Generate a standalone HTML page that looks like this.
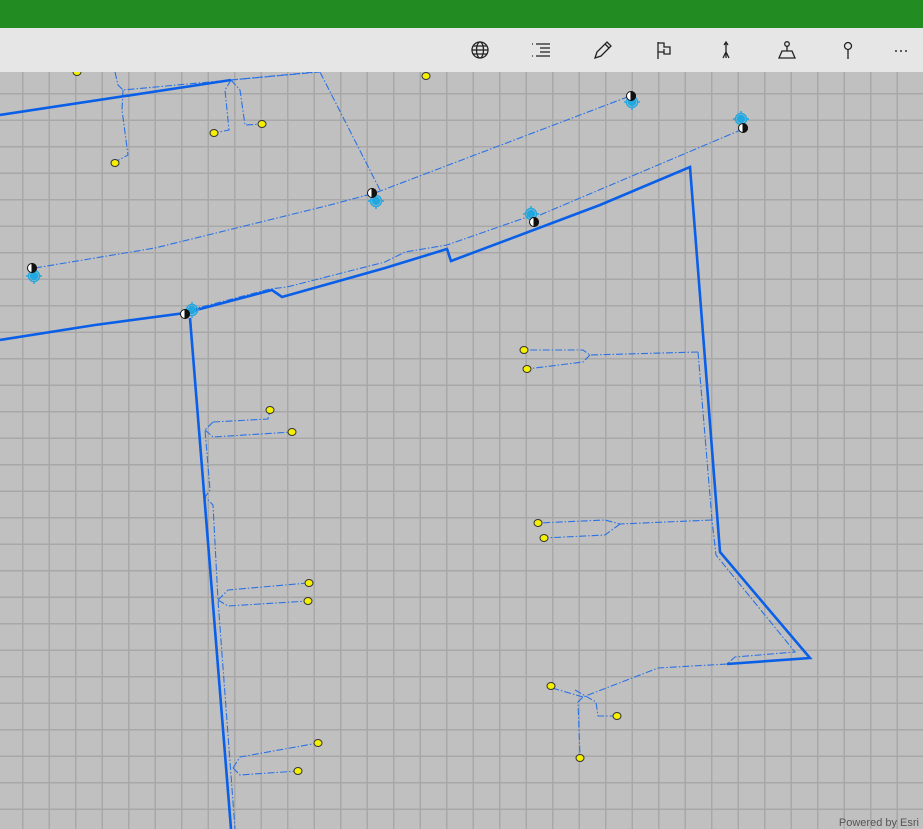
<!DOCTYPE html>
<html><head><meta charset="utf-8"><style>
html,body{margin:0;padding:0;width:923px;height:829px;overflow:hidden;background:#c0c0c0;font-family:"Liberation Sans",sans-serif}
#hdr{position:absolute;left:0;top:0;width:923px;height:28px;background:#228b22}
#tb{position:absolute;left:0;top:28px;width:923px;height:44px;background:#e6e6e6}
#grid{position:absolute;left:0;top:72px;width:923px;height:757px;
background-color:#c0c0c0;
background-image:linear-gradient(to right,#a8a8a8 0,#a8a8a8 1.5px,transparent 1.5px),linear-gradient(to bottom,#a8a8a8 0,#a8a8a8 1.5px,transparent 1.5px);
background-size:26.5px 26.5px;background-position:22px -58.5px}
#map{position:absolute;left:0;top:72px}
#esri{position:absolute;right:4px;bottom:0px;font-size:11px;color:#555}
</style></head><body>
<div id="hdr"></div>
<div id="tb">
<svg width="923" height="44" fill="none" stroke="#222" stroke-width="1.3">
<g transform="translate(480,22)"><circle r="8"/><ellipse rx="3.5" ry="8"/><line x1="-8" y1="0" x2="8" y2="0"/><path d="M-7 -4H7M-7 4H7"/></g>
<g transform="translate(541,22)"><path d="M-5 -6H9M-1 -2H9M-1 2H9M-5 6H9M-9 -6h1M-9 6h1"/></g>
<g transform="translate(603,22)"><path d="M-8 8l2-6 10-10 4 4-10 10z M2 -6l4 4"/></g>
<g transform="translate(664,22)"><path d="M-6 9V-8M-6 -7H0V-3H6V4H0V-1M-6 2H0"/></g>
<g transform="translate(726,22)"><path d="M0 -8V8M-2 -5L0 -8 2 -5M-3 8L0 2 3 8"/></g>
<g transform="translate(787,22)"><circle cx="0" cy="-6" r="2.3"/><path d="M0 -4V1M-5 1H5L8 8H-8Z"/></g>
<g transform="translate(848,22)"><circle cx="0" cy="-4" r="3.5"/><path d="M0 -0.5V9"/></g>
<g fill="#333" stroke="none"><circle cx="896" cy="23" r="1"/><circle cx="901" cy="23" r="1"/><circle cx="906" cy="23" r="1"/></g>
</svg></div>
<div id="grid"></div>
<svg id="map" width="923" height="757" viewBox="0 72 923 757">
<g fill="none" stroke="#2a72e6" stroke-width="1.1" stroke-dasharray="7 2 1.5 2">
<path d="M35 268L155 248 330 205 375 193 630 96"/>
<path d="M380 190L320 72"/>
<path d="M190 310L270 289 287 287 385 262 405 252 447 245 533 215"/>
<path d="M540 215L743 129"/>
<path d="M115 72L118 85 123 90 231 80 320 72"/>
<path d="M123 90L122 110 128 155 115 162"/>
<path d="M231 80L225 90 229 130 214 133"/>
<path d="M231 80L240 90 245 125 262 124"/>
<path d="M231 80L315 72"/>
<path d="M213 422L205 430 210 490 205 497 213 505 218 600 235 829"/>
<path d="M213 422L268 419 270 410M205 430L213 437 292 432"/>
<path d="M218 600L228 590 308 583M218 600L228 606 308 601"/>
<path d="M233 768L240 757 318 743M233 768L240 775 298 771"/>
<path d="M698 352L712 520 716 555 795 652 735 657 727 664 658 668 583 697 578 702 580 757"/>
<path d="M583 697L552 688M575 690L596 702 598 716 617 716"/>
<path d="M698 352L590 355 583 350 525 350M590 355L583 362 527 369"/>
<path d="M712 520L620 524 605 520 538 523M620 524L605 535 544 538"/>
</g>
<g fill="none" stroke="#0a5fe8" stroke-width="2.6" stroke-linejoin="miter">
<path d="M0 115L231 80"/>
<path d="M0 340L95 325 185 313 272 290 282 297 385 268 447 249 451 261 600 205 690 167 720 552 810 658 727 664"/>
<path d="M190 318L231 829"/>
</g>
<g fill="#f4f000" stroke="#333" stroke-width="1">
<ellipse cx="77" cy="72" rx="4" ry="3.5"/><ellipse cx="426" cy="76" rx="4" ry="3.5"/><ellipse cx="214" cy="133" rx="4" ry="3.5"/><ellipse cx="262" cy="124" rx="4" ry="3.5"/><ellipse cx="115" cy="163" rx="4" ry="3.5"/><ellipse cx="524" cy="350" rx="4" ry="3.5"/><ellipse cx="527" cy="369" rx="4" ry="3.5"/><ellipse cx="270" cy="410" rx="4" ry="3.5"/><ellipse cx="292" cy="432" rx="4" ry="3.5"/><ellipse cx="538" cy="523" rx="4" ry="3.5"/><ellipse cx="544" cy="538" rx="4" ry="3.5"/><ellipse cx="309" cy="583" rx="4" ry="3.5"/><ellipse cx="308" cy="601" rx="4" ry="3.5"/><ellipse cx="551" cy="686" rx="4" ry="3.5"/><ellipse cx="617" cy="716" rx="4" ry="3.5"/><ellipse cx="580" cy="758" rx="4" ry="3.5"/><ellipse cx="318" cy="743" rx="4" ry="3.5"/><ellipse cx="298" cy="771" rx="4" ry="3.5"/>
</g>
<g fill="none" stroke="#22a8e0" stroke-width="1.5">
<g transform="translate(632,102)"><circle r="3.5" fill="#22a8e0"/><path d="M-6 0h-2M6 0h2M0 -6v-2M0 6v2"/><circle r="5.5"/></g>
<g transform="translate(741,119)"><circle r="3.5" fill="#22a8e0"/><path d="M-6 0h-2M6 0h2M0 -6v-2M0 6v2"/><circle r="5.5"/></g>
<g transform="translate(376,201)"><circle r="3.5" fill="#22a8e0"/><path d="M-6 0h-2M6 0h2M0 -6v-2M0 6v2"/><circle r="5.5"/></g>
<g transform="translate(531,214)"><circle r="3.5" fill="#22a8e0"/><path d="M-6 0h-2M6 0h2M0 -6v-2M0 6v2"/><circle r="5.5"/></g>
<g transform="translate(34,276)"><circle r="3.5" fill="#22a8e0"/><path d="M-6 0h-2M6 0h2M0 -6v-2M0 6v2"/><circle r="5.5"/></g>
<g transform="translate(192,310)"><circle r="3.5" fill="#22a8e0"/><path d="M-6 0h-2M6 0h2M0 -6v-2M0 6v2"/><circle r="5.5"/></g>
</g>
<g stroke="#111" stroke-width="1">
<g transform="translate(631,96)"><circle r="4.5" fill="#fff"/><path d="M0 -4.5A4.5 4.5 0 0 1 0 4.5Z" fill="#111"/></g>
<g transform="translate(743,128)"><circle r="4.5" fill="#fff"/><path d="M0 -4.5A4.5 4.5 0 0 1 0 4.5Z" fill="#111"/></g>
<g transform="translate(372,193)"><circle r="4.5" fill="#fff"/><path d="M0 -4.5A4.5 4.5 0 0 1 0 4.5Z" fill="#111"/></g>
<g transform="translate(534,222)"><circle r="4.5" fill="#fff"/><path d="M0 -4.5A4.5 4.5 0 0 1 0 4.5Z" fill="#111"/></g>
<g transform="translate(32,268)"><circle r="4.5" fill="#fff"/><path d="M0 -4.5A4.5 4.5 0 0 1 0 4.5Z" fill="#111"/></g>
<g transform="translate(185,314)"><circle r="4.5" fill="#fff"/><path d="M0 -4.5A4.5 4.5 0 0 1 0 4.5Z" fill="#111"/></g>
</g>
</svg>
<div id="esri">Powered by Esri</div>
</body></html>
